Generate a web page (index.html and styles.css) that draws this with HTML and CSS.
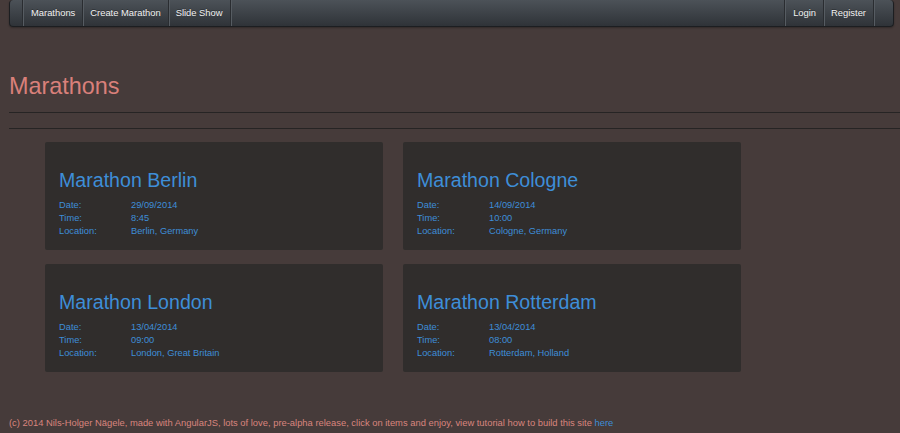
FILE: index.html
```html
<!DOCTYPE html>
<html>
<head>
<meta charset="utf-8">
<link rel="stylesheet" href="styles.css">
</head>
<body>
<div class="navbar">
  <ul class="nav">
    <li><a>Marathons</a></li>
    <li><a>Create Marathon</a></li>
    <li><a>Slide Show</a></li>
  </ul>
  <ul class="nav right">
    <li><a>Login</a></li>
    <li><a>Register</a></li>
  </ul>
</div>
<h1 class="title">Marathons</h1>
<hr class="rule">
<hr class="rule">
<div class="grid">
  <div class="card">
    <h2>Marathon Berlin</h2>
    <div class="row"><span class="k">Date:</span><span>29/09/2014</span></div>
    <div class="row"><span class="k">Time:</span><span>8:45</span></div>
    <div class="row"><span class="k">Location:</span><span>Berlin, Germany</span></div>
  </div>
  <div class="card">
    <h2>Marathon Cologne</h2>
    <div class="row"><span class="k">Date:</span><span>14/09/2014</span></div>
    <div class="row"><span class="k">Time:</span><span>10:00</span></div>
    <div class="row"><span class="k">Location:</span><span>Cologne, Germany</span></div>
  </div>
  <div class="card">
    <h2>Marathon London</h2>
    <div class="row"><span class="k">Date:</span><span>13/04/2014</span></div>
    <div class="row"><span class="k">Time:</span><span>09:00</span></div>
    <div class="row"><span class="k">Location:</span><span>London, Great Britain</span></div>
  </div>
  <div class="card">
    <h2>Marathon Rotterdam</h2>
    <div class="row"><span class="k">Date:</span><span>13/04/2014</span></div>
    <div class="row"><span class="k">Time:</span><span>08:00</span></div>
    <div class="row"><span class="k">Location:</span><span>Rotterdam, Holland</span></div>
  </div>
</div>
<p class="footer">(c) 2014 Nils-Holger Nägele, made with AngularJS, lots of love, pre-alpha release, click on items and enjoy, view tutorial how to build this site <a>here</a></p>
</body>
</html>
```
FILE: styles.css
```css
html, body { margin: 0; padding: 0; }
body {
  background: #463b3a;
  font-family: "Liberation Sans", Arial, sans-serif;
  font-size: 10px;
  color: #d9857e;
  width: 900px;
  height: 433px;
  overflow: hidden;
}
.navbar {
  margin: 0 6px 0 9px;
  height: 27px;
  box-sizing: border-box;
  border: 1px solid #1c1e21;
  border-top: none;
  border-radius: 4px;
  background: linear-gradient(#4c5258, #2f3338);
  display: flex;
  justify-content: space-between;
  padding: 0 19px 0 13px;
  box-shadow: 0 1px 2px rgba(0,0,0,0.3);
}
.nav {
  list-style: none;
  margin: 0;
  padding: 0;
  display: flex;
  border-left: 1px solid #565c62;
  box-shadow: -1px 0 0 #2a2d31;
}
.nav li {
  border-right: 1px solid #2a2d31;
  box-shadow: 1px 0 0 #565c62;
}
.nav a {
  display: block;
  padding: 0 7px;
  line-height: 26px;
  color: #f2f2f2;
  font-size: 9.4px;
  text-shadow: 0 -1px 0 rgba(0,0,0,0.3);
}
.title {
  margin: 45px 0 0 9px;
  font-weight: normal;
  font-size: 23.4px;
  line-height: 28px;
  color: #d9807a;
}
.rule {
  margin: 12px 0 0 9px;
  border: none;
  border-top: 1px solid #262424;
  height: 0;
}
.rule + .rule { margin-top: 15px; }
.grid {
  display: grid;
  grid-template-columns: 338px 338px;
  column-gap: 20px;
  row-gap: 14px;
  margin: 13px 0 0 45px;
}
.card {
  background: #302d2c;
  border-radius: 2px;
  height: 108px;
  box-sizing: border-box;
  padding: 25px 14px 0;
  color: #3e8ed8;
}
.card h2 {
  margin: 0 0 6px;
  font-weight: normal;
  font-size: 19.6px;
  line-height: 26px;
  color: #3e8ed8;
}
.row {
  display: flex;
  font-size: 9.3px;
  line-height: 13px;
}
.row .k { width: 72px; }
.footer {
  margin: 45px 0 0 9px;
  font-size: 9.4px;
  color: #d9857e;
}
.footer a { color: #3e8ed8; }
```
